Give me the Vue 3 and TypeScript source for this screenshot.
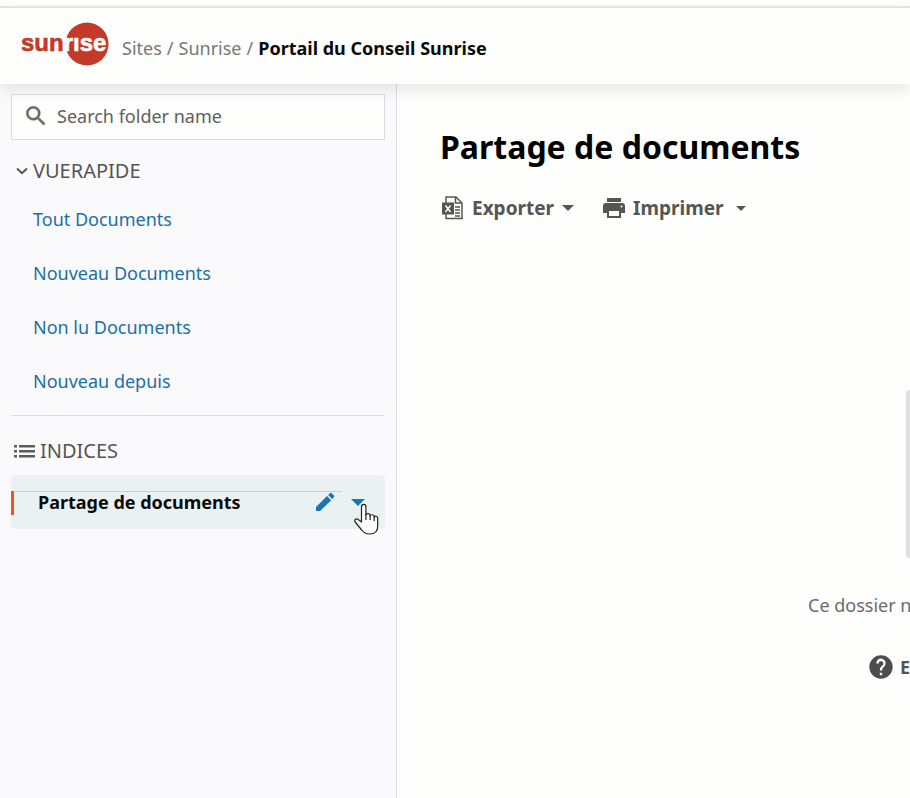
<script setup lang="ts">
import { ref } from 'vue'

interface QuickLink {
  id: string
  label: string
}

const folderName = ref('')
const quickOpen = ref(true)

const crumbs: string[] = ['Sites', 'Sunrise']

const quickLinks: QuickLink[] = [
  { id: 'all', label: 'Tout Documents' },
  { id: 'new', label: 'Nouveau Documents' },
  { id: 'unread', label: 'Non lu Documents' },
  { id: 'since', label: 'Nouveau depuis' },
]
</script>

<template>
  <div class="page">
    <header class="topbar">
      <a class="logo" href="#" aria-label="sunrise">
        <svg width="90" height="44" viewBox="0 0 90 44" aria-hidden="true">
          <circle cx="66" cy="22" r="21.5" fill="#c33a28" />
          <text x="0" y="29" class="logo-text" fill="#c33a28" stroke="#c33a28">sun<tspan fill="#fff" stroke="#fff">rıse</tspan></text>
        </svg>
      </a>
      <nav class="crumbs" aria-label="Breadcrumb">
        <template v-for="crumb in crumbs" :key="crumb">
          <a href="#">{{ crumb }}</a><span>/</span>
        </template>
        <strong>Portail du Conseil Sunrise</strong>
      </nav>
    </header>

    <div class="body">
      <aside class="sidebar">
        <label class="search">
          <svg width="26" height="26" viewBox="0 0 24 24" fill="#6a6a6c" stroke="#6a6a6c" stroke-width=".4" aria-hidden="true">
            <path d="M15.5 14h-.79l-.28-.27A6.47 6.47 0 0 0 16 9.5 6.5 6.5 0 1 0 9.500 16c1.610 0 3.090-.59 4.230-1.570l.27.28v.79l5 4.990L20.490 19l-4.990-5zm-6 0a4.500 4.500 0 1 1 0-9 4.500 4.500 0 0 1 0 9z" />
          </svg>
          <input v-model="folderName" type="text" placeholder="Search folder name" aria-label="Search folder name" />
        </label>

        <button class="quick-head" type="button" :aria-expanded="quickOpen" @click="quickOpen = !quickOpen">
          <svg width="12" height="8" viewBox="0 0 12 8" fill="none" stroke="#555" stroke-width="2" aria-hidden="true">
            <path d="M1 1.5 6 6.2 11 1.5" />
          </svg>
          <span>VUERAPIDE</span>
        </button>
        <ul v-if="quickOpen" class="quick-list">
          <li v-for="link in quickLinks" :key="link.id">
            <a href="#">{{ link.label }}</a>
          </li>
        </ul>

        <h2 class="index-head">
          <svg width="22" height="14" viewBox="0 0 22 14" fill="#5c5c5e" aria-hidden="true">
            <path d="M0 1h3v2.500H0zM5 1h16v2.500H5zM0 6h3v2.500H0zM5 6h16v2.500H5zM0 11h3v2.500H0zM5 11h16v2.500H5z" />
          </svg>
          <span>INDICES</span>
        </h2>
        <div class="folder">
          <a class="folder-name" href="#">Partage de documents</a>
          <button class="icon-button" type="button" aria-label="Modifier">
            <svg width="24" height="24" viewBox="0 0 24 24" fill="#1b74b5" aria-hidden="true">
              <path d="M3 17v4h4L18.200 10.200l-4.200-4.200L3 17zM20.900 7.200a1.200 1.200 0 0 0 0-1.600l-2.400-2.400a1.200 1.200 0 0 0-1.600 0L15.200 4.900l4 4 1.700-1.700z" />
            </svg>
          </button>
          <button class="icon-button" type="button" aria-label="Plus">
            <svg width="14" height="7" viewBox="0 0 14 7" fill="#1b74b5" aria-hidden="true">
              <path d="M0 0h14L7 7z" />
            </svg>
          </button>
          <svg class="pointer" width="26" height="34" viewBox="0 0 26 34" aria-hidden="true">
            <path
              d="M8.5 20V4.500a2.200 2.200 0 0 1 4.400 0V13c0-2 4-2 4.200.3V14c.3-1.800 3.900-1.700 4.100.4v.8c.4-1.500 3.400-1.300 3.500.8v8c0 5-3 8-8 8-4 0-6-1-8-4l-6.500-8c-1.500-2.300 1-4 3-2.500z"
              fill="#fff" stroke="#222" stroke-width="1.2" stroke-linejoin="round"
            />
            <path d="M12.900 12v6M17.100 13.500V18M21.200 14.500V19" fill="none" stroke="#222" stroke-width="1.2" />
          </svg>
        </div>
      </aside>

      <main class="content">
        <h1>Partage de documents</h1>
        <div class="tools">
          <button class="tool" type="button">
            <svg width="22" height="24" viewBox="0 0 22 24" aria-hidden="true">
              <path d="M4 7V1h10l6 6v15.500H4V17" fill="none" stroke="#555" stroke-width="1.5" />
              <path d="M13.500 1v6H20" fill="none" stroke="#555" stroke-width="1.5" />
              <path d="M0 6.500h12v12H0z" fill="#555" />
              <path d="M3.500 9.500l5 6.500M8.500 9.500l-5 6.500" stroke="#fff" stroke-width="1.5" />
              <path d="M13 11h5M13 14h5M13 17h5M13 20h5" stroke="#555" stroke-width="1.3" />
            </svg>
            <span>Exporter</span>
            <svg width="12" height="6" viewBox="0 0 12 6" fill="#555" aria-hidden="true">
              <path d="M0 0h12L6 6z" />
            </svg>
          </button>
          <button class="tool print" type="button">
            <svg width="22" height="20" viewBox="0 0 22 20" fill="#555" aria-hidden="true">
              <path d="M4 0h14v4H4z" />
              <path d="M3 5h16a3 3 0 0 1 3 3v7h-4v5H4v-5H0V8a3 3 0 0 1 3-3zm3 8v5h10v-5H6zm12.500-5.500a1 1 0 1 0 0 2 1 1 0 0 0 0-2z" fill-rule="evenodd" />
            </svg>
            <span>Imprimer</span>
            <svg class="caret" width="10" height="5" viewBox="0 0 10 5" fill="#555" aria-hidden="true">
              <path d="M0 0h10L5 5z" />
            </svg>
          </button>
        </div>

        <section class="empty">
          <div class="art"></div>
          <p>Ce dossier n</p>
          <a class="help" href="#">
            <svg width="28" height="28" viewBox="0 0 24 24" fill="#4d4d4f" aria-hidden="true">
              <path d="M12 2a10 10 0 1 0 0 20 10 10 0 0 0 0-20zm1 17h-2v-2h2v2zm2.070-7.750-.9.920C13.450 12.900 13 13.500 13 15h-2v-.5c0-1.100.45-2.100 1.170-2.830l1.240-1.260A2 2 0 1 0 10 9H8a4 4 0 1 1 7.070 2.250z" />
            </svg>
            <span>E</span>
          </a>
        </section>
      </main>
    </div>
  </div>
</template>

<style>
body {
  margin: 0;
  overflow: hidden;
}
</style>

<style scoped>
* {
  box-sizing: border-box;
}

.page {
  display: flex;
  flex-direction: column;
  min-height: 100vh;
  overflow: hidden;
  background: #fefefd;
  color: #555;
  font-family: "Noto Sans", "Open Sans", sans-serif;
  font-size: 18px;
  line-height: 24px;
}

a {
  color: inherit;
  text-decoration: none;
}

button {
  display: flex;
  align-items: center;
  padding: 0;
  border: 0;
  background: none;
  color: inherit;
  font: inherit;
  cursor: pointer;
}

svg {
  display: block;
  flex: none;
}

.topbar {
  position: relative;
  display: flex;
  align-items: center;
  gap: 11px;
  height: 78px;
  margin-top: 6px;
  padding: 0 22px 0 21px;
  border-top: 2px solid #e2e2e6;
  background: #fefefd;
  box-shadow: 0 6px 14px rgba(0, 0, 0, 0.09);
  clip-path: inset(-2px 0 -30px 0);
}

.logo {
  padding-bottom: 4px;
}

.logo-text {
  font: bold 24px "Liberation Sans", Arial, sans-serif;
  stroke-width: 0.6px;
}

.crumbs {
  display: flex;
  gap: 5px;
  padding-top: 4px;
  color: #77777a;
  white-space: nowrap;
}

.crumbs strong {
  color: #0a0a0a;
}

.body {
  display: flex;
  flex: 1;
}

.sidebar {
  flex: none;
  width: 397px;
  padding: 10px 11px;
  border-right: 1px solid #dcdce1;
  background: #fafafc;
}

.search {
  display: flex;
  align-items: center;
  gap: 8px;
  height: 46px;
  padding: 0 12px 2px 11px;
  border: 1px solid #dcdce1;
  background: #fefefd;
}

.search input {
  flex: 1;
  min-width: 0;
  padding: 0;
  border: 0;
  outline: 0;
  background: none;
  color: #555;
  font: inherit;
}

.search input::placeholder {
  color: #5e5e60;
  opacity: 1;
}

.quick-head {
  gap: 5px;
  height: 42px;
  margin-top: 10px;
  padding-left: 5px;
  font-size: 20px;
}

.quick-list {
  margin: 0;
  padding: 0 0 7px 22px;
  list-style: none;
  color: #1b6fa8;
}

.quick-list li {
  display: flex;
  align-items: center;
  height: 54px;
}

.index-head {
  display: flex;
  align-items: center;
  gap: 4px;
  height: 60px;
  margin: 0;
  padding: 10px 0 0 3px;
  border-top: 1px solid #dcdce1;
  font-size: 20px;
  font-weight: 400;
}

.folder {
  position: relative;
  display: flex;
  align-items: center;
  gap: 14px;
  height: 54px;
  padding: 0 20px 0 27px;
  border-radius: 4px;
  background: #e9f1f2;
}

.folder::before {
  content: "";
  position: absolute;
  top: 16px;
  left: 0;
  width: 3px;
  height: 24px;
  background: #f0541e;
}

.folder::after {
  content: "";
  position: absolute;
  top: 16px;
  left: 3px;
  right: 43px;
  height: 1px;
  background: #f0c4ab;
}

.folder-name {
  flex: 1;
  color: #0a0a0a;
  font-weight: 700;
}

.pointer {
  position: absolute;
  top: 27px;
  right: 6px;
}

.content {
  flex: 1;
  min-width: 0;
  padding: 42px 0 0 43px;
  white-space: nowrap;
}

h1 {
  margin: 0;
  color: #000;
  font-size: 32px;
  line-height: 42px;
}

.tools {
  display: flex;
  gap: 29px;
  margin-top: 27px;
  padding-left: 2px;
  font-size: 19px;
  font-weight: 700;
}

.tool {
  gap: 8px;
  height: 26px;
}

.print .caret {
  margin-left: 4px;
}

.empty {
  display: grid;
  justify-items: start;
  margin-top: 169px;
  padding-left: 368px;
}

.art {
  width: 100%;
  height: 168px;
  margin-left: 98px;
  border-radius: 4px;
  background: #e0e0e4;
}

.empty p {
  margin: 35px 0 0;
  color: #6b6b6e;
}

.help {
  display: flex;
  align-items: center;
  gap: 5px;
  margin: 36px 0 0 59px;
  font-weight: 700;
}
</style>
